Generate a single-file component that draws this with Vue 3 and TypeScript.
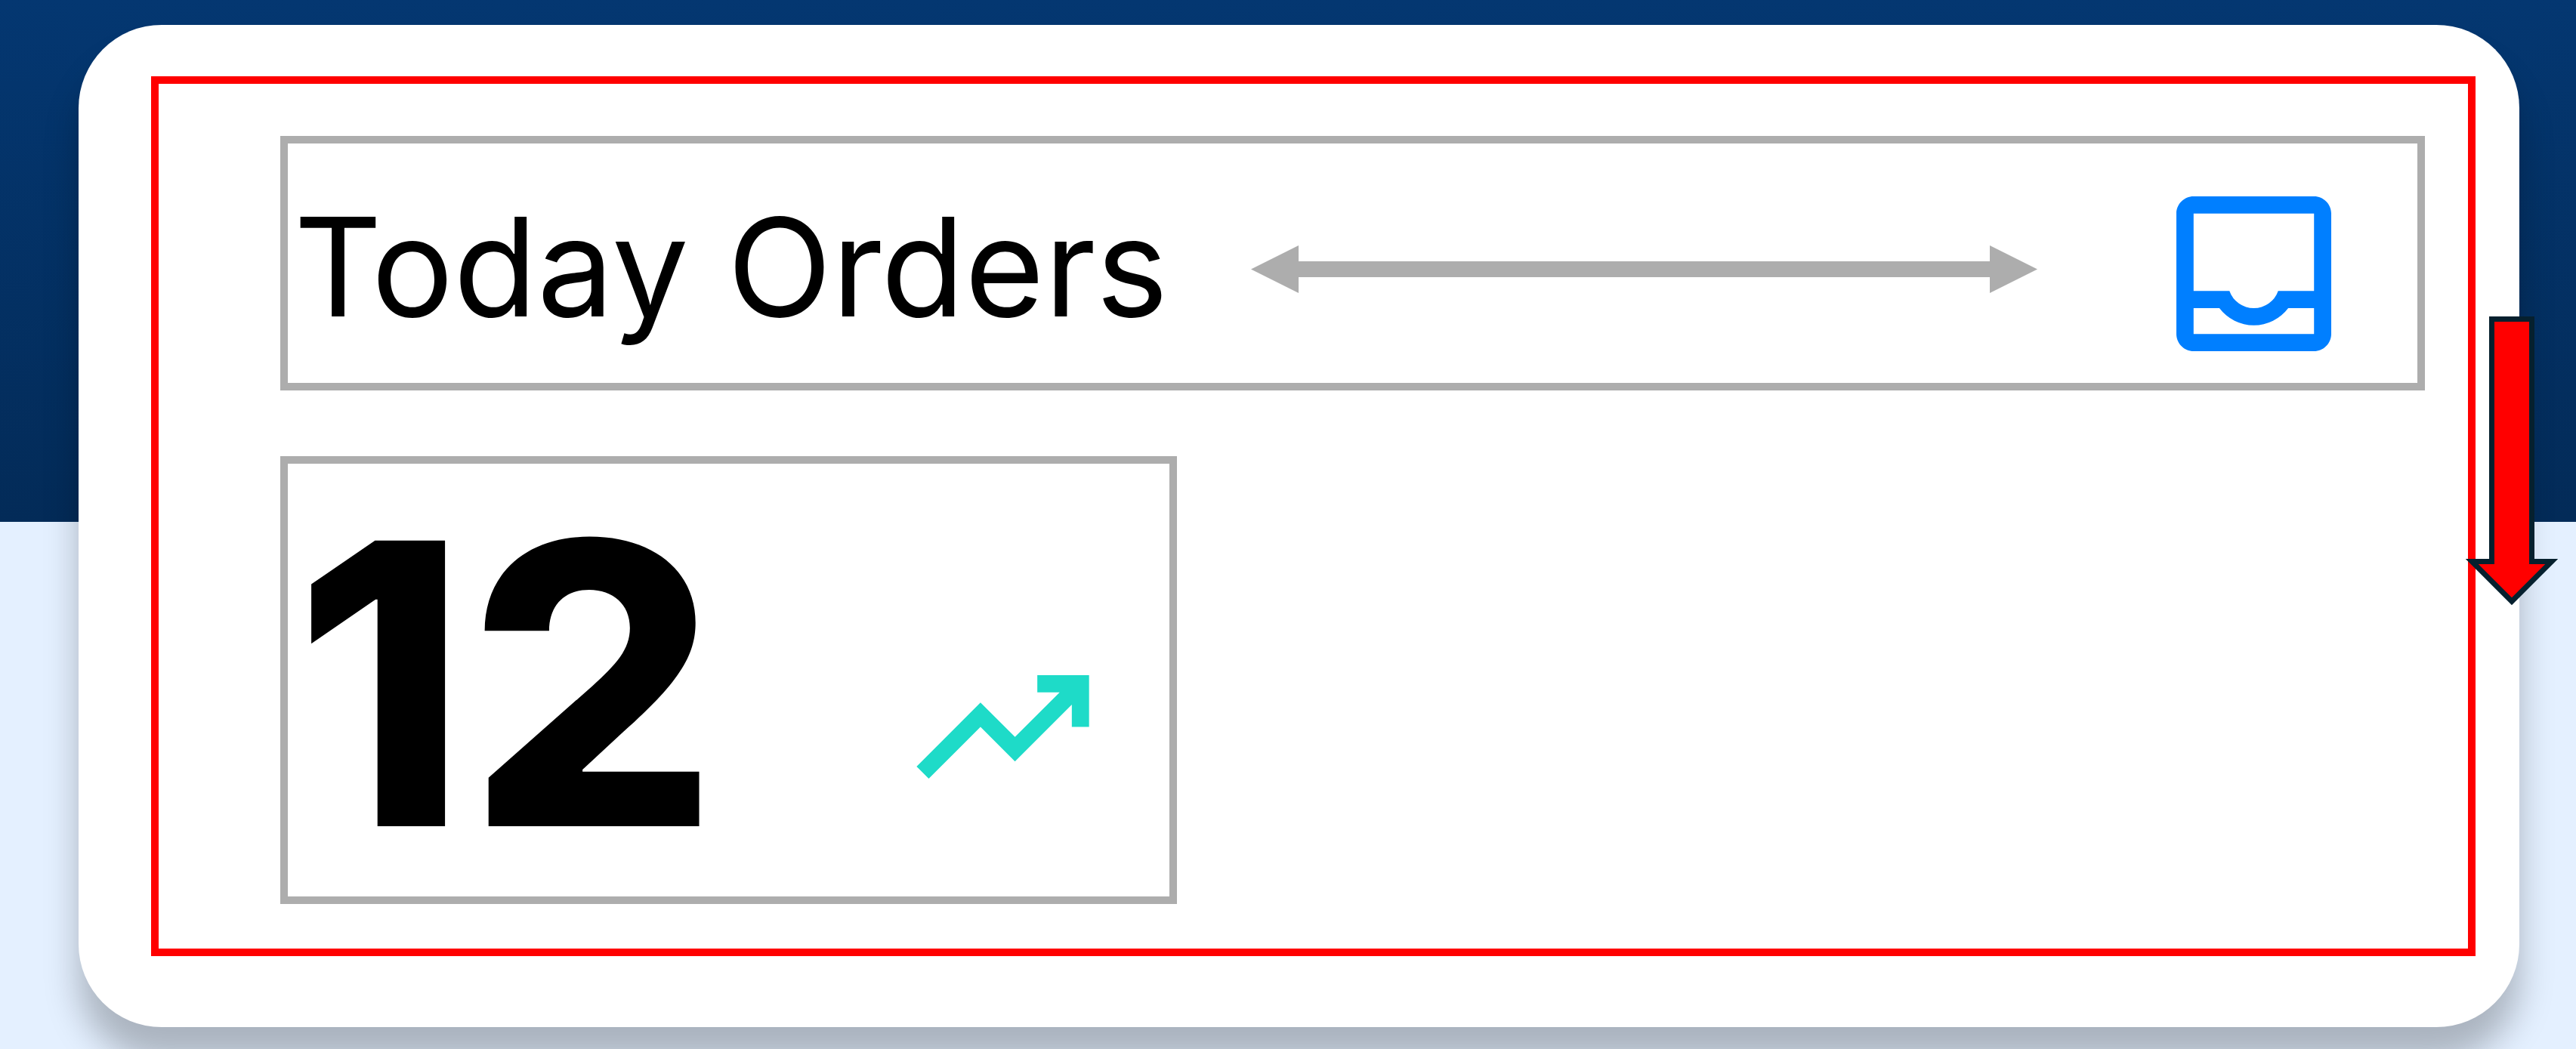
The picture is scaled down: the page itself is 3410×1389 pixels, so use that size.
<script setup lang="ts">
interface OrderSummary {
  label: string
  count: number
}

const summary: OrderSummary = { label: 'Today Orders', count: 12 }
</script>

<template>
  <main class="page">
    <article class="card">
      <div class="column">
        <header class="header">
          <h1 class="title">{{ summary.label }}</h1>
          <div class="spacer" aria-hidden="true">
            <svg class="head" viewBox="0 0 63 63"><path d="M0 31.5 63 0V63Z" /></svg>
            <span class="shaft"></span>
            <svg class="head" viewBox="0 0 63 63"><path d="M63 31.5 0 0V63Z" /></svg>
          </div>
          <svg class="inbox" viewBox="3 3 18 18" aria-hidden="true">
            <path
              fill-rule="evenodd"
              d="M19 3H5C3.9 3 3 3.9 3 5V19C3 20.1 3.9 21 5 21H19C20.1 21 21 20.1 21 19V5C21 3.9 20.1 3 19 3ZM19 19H5V16H8A5 5 0 0 0 16 16H19ZM19 14H14.83A3 3 0 0 1 9.17 14H5V5H19Z"
            />
          </svg>
        </header>
        <section class="value">
          <strong class="count">{{ summary.count }}</strong>
          <svg class="trend" viewBox="2 6 20 12" aria-hidden="true">
            <path d="M16 6v2h2.59l-5.18 5.17-4-4L2 16.59 3.41 18l6-6 4 4L20 9.41V12h2V6z" />
          </svg>
        </section>
      </div>
      <svg class="direction" viewBox="0 0 122 383" aria-hidden="true">
        <path d="M34.5 3.5H87.5V324.5H113.7L61 377.2 8.3 324.5H34.5Z" />
      </svg>
    </article>
  </main>
</template>

<style>
body {
  margin: 0;
}
</style>

<style scoped>
.page {
  box-sizing: border-box;
  min-height: 100vh;
  padding: 33px 75px 29px 104px;
  overflow: hidden;
  background: linear-gradient(#043771, #032b58 691px, #e4f0ff 691px);
  font-family: Inter, 'Liberation Sans', sans-serif;
  color: #000;
}

.card {
  position: relative;
  padding: 68px 58px 94px 96px;
  border-radius: 110px;
  background: #fff;
  box-shadow: 0 45px 45px rgba(0, 0, 0, 0.25);
}

.column {
  display: flex;
  flex-direction: column;
  align-items: flex-start;
  gap: 87px;
  padding: 69px 57px 59px 161px;
  border: 10px solid #f00;
}

.header {
  box-sizing: border-box;
  display: flex;
  align-items: center;
  align-self: stretch;
  min-height: 337px;
  padding: 10px 114px 0 8px;
  border: 10px solid #adadad;
}

.title {
  margin: 0;
  font-size: 181px;
  font-weight: 400;
  line-height: 220px;
  white-space: nowrap;
}

.spacer {
  flex: 1;
  display: flex;
  align-items: center;
  padding: 6px 184px 0 110px;
}

.head {
  width: 63px;
  height: 63px;
  fill: #adadad;
}

.shaft {
  flex: 1;
  height: 21px;
  background: #adadad;
}

.inbox {
  width: 205px;
  height: 205px;
  padding-top: 18px;
  fill: #007fff;
}

.value {
  display: flex;
  align-items: center;
  justify-content: space-between;
  box-sizing: border-box;
  min-width: 1187px;
  min-height: 593px;
  padding: 0 106px 0 8px;
  border: 10px solid #adadad;
}

.count {
  padding-top: 8px;
  font-size: 520px;
  font-weight: 800;
  line-height: 560px;
}

.trend {
  width: 229px;
  height: 137px;
  padding-top: 124px;
  fill: #1edbc8;
}

.direction {
  position: absolute;
  top: 386px;
  right: -51px;
  width: 122px;
  height: 383px;
  fill: #f00;
  stroke: #06202e;
  stroke-width: 7px;
}
</style>
